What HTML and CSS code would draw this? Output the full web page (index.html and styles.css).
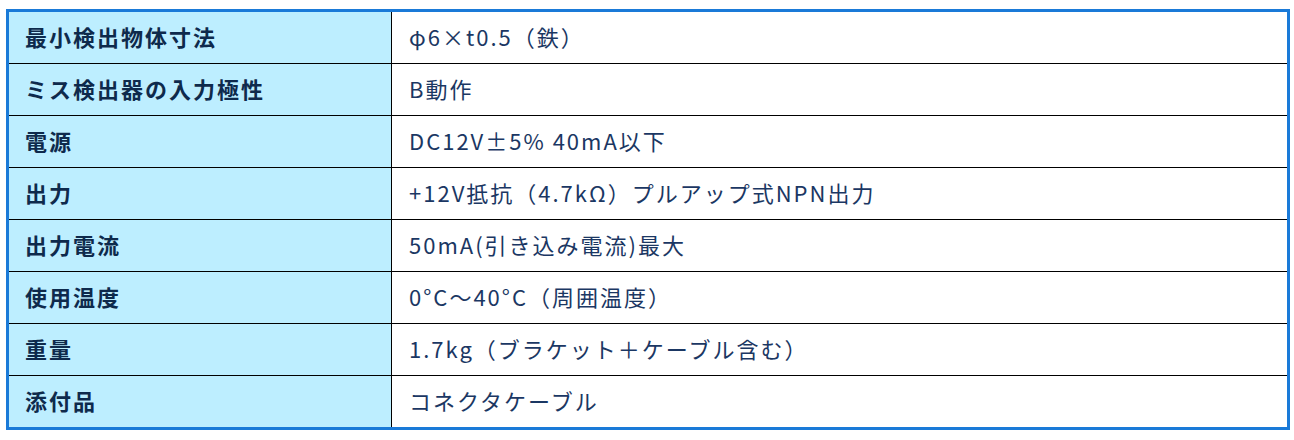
FILE: index.html
```html
<!DOCTYPE html>
<html lang="ja">
<head>
<meta charset="utf-8">
<title>仕様</title>
<link rel="stylesheet" href="styles.css">
</head>
<body>
<div class="spec">
  <div class="k">最小検出物体寸法</div><div class="v">φ6×t0.5（鉄）</div>
  <div class="k">ミス検出器の入力極性</div><div class="v">B動作</div>
  <div class="k">電源</div><div class="v">DC12V±5% 40mA以下</div>
  <div class="k">出力</div><div class="v">+12V抵抗（4.7kΩ）プルアップ式NPN出力</div>
  <div class="k">出力電流</div><div class="v">50mA(引き込み電流)最大</div>
  <div class="k">使用温度</div><div class="v">0°C～40°C（周囲温度）</div>
  <div class="k">重量</div><div class="v">1.7kg（ブラケット＋ケーブル含む）</div>
  <div class="k">添付品</div><div class="v">コネクタケーブル</div>
</div>
</body>
</html>
```
FILE: styles.css
```css
html, body {
  margin: 0;
  padding: 0;
  background: #ffffff;
}
body {
  padding: 9px 0 0 6px;
  font-family: "Noto Sans CJK JP", "Noto Sans", sans-serif;
}
.spec {
  box-sizing: border-box;
  width: 1284px;
  border: 3px solid #1a7ad8;
  background: #000000;
  display: grid;
  grid-template-columns: 382px 1fr;
  grid-auto-rows: 51px;
  gap: 1px;
}
.k, .v {
  display: flex;
  align-items: center;
  font-size: 22px;
  line-height: 1;
  letter-spacing: 2px;
  white-space: nowrap;
  padding-bottom: 3px;
  box-sizing: border-box;
}
.k {
  background: #bdeeff;
  color: #0e2a4c;
  font-weight: 700;
  padding-left: 16px;
}
.v {
  background: #ffffff;
  color: #1b3763;
  font-weight: 400;
  padding-left: 17px;
}
```
